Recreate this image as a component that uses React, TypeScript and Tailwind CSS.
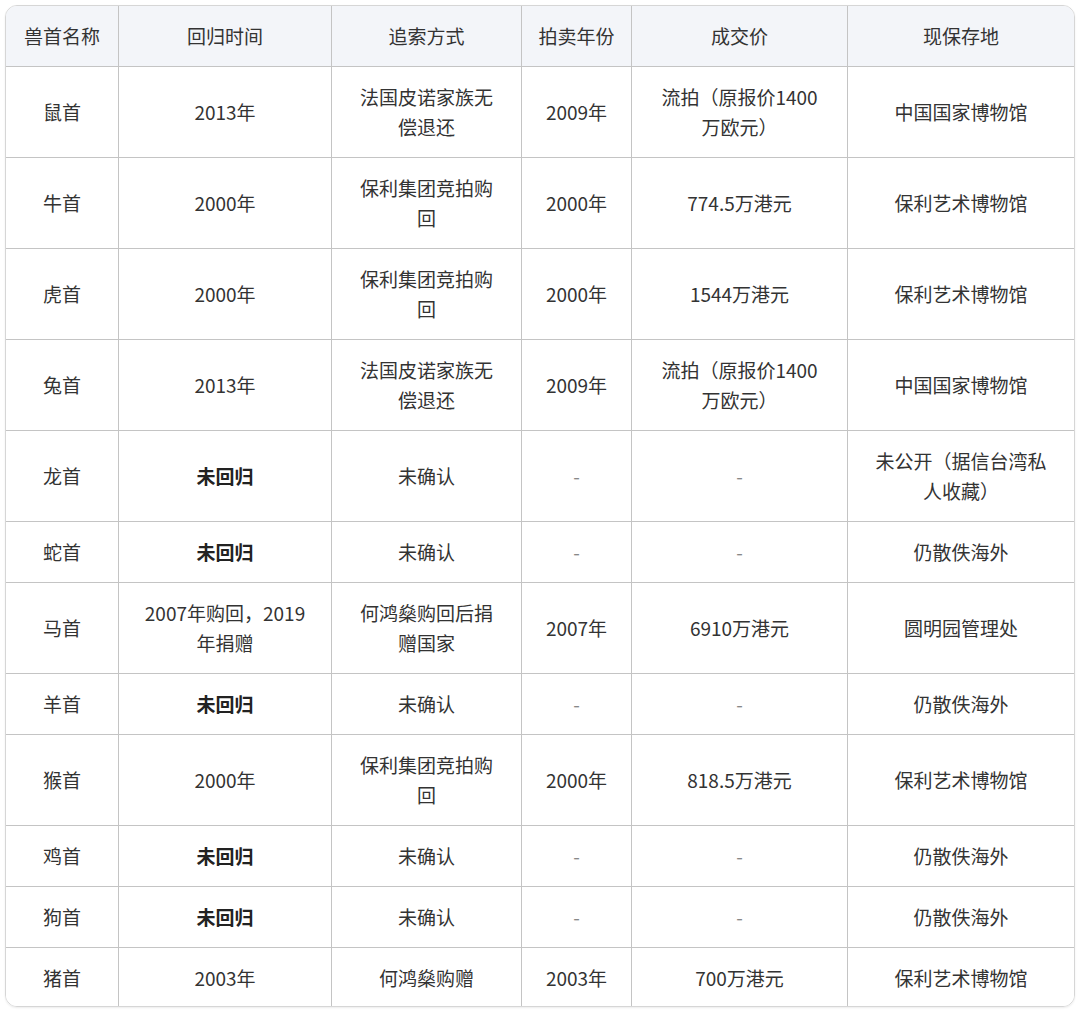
type Row = {
  name: string;
  back: string;
  bold?: boolean;
  way: string;
  year: string;
  price: string;
  place: string;
};

const rows: Row[] = [
  { name: "鼠首", back: "2013年", way: "法国皮诺家族无偿退还", year: "2009年", price: "流拍（原报价1400万欧元）", place: "中国国家博物馆" },
  { name: "牛首", back: "2000年", way: "保利集团竞拍购回", year: "2000年", price: "774.5万港元", place: "保利艺术博物馆" },
  { name: "虎首", back: "2000年", way: "保利集团竞拍购回", year: "2000年", price: "1544万港元", place: "保利艺术博物馆" },
  { name: "兔首", back: "2013年", way: "法国皮诺家族无偿退还", year: "2009年", price: "流拍（原报价1400万欧元）", place: "中国国家博物馆" },
  { name: "龙首", back: "未回归", bold: true, way: "未确认", year: "-", price: "-", place: "未公开（据信台湾私人收藏）" },
  { name: "蛇首", back: "未回归", bold: true, way: "未确认", year: "-", price: "-", place: "仍散佚海外" },
  { name: "马首", back: "2007年购回，2019年捐赠", way: "何鸿燊购回后捐赠国家", year: "2007年", price: "6910万港元", place: "圆明园管理处" },
  { name: "羊首", back: "未回归", bold: true, way: "未确认", year: "-", price: "-", place: "仍散佚海外" },
  { name: "猴首", back: "2000年", way: "保利集团竞拍购回", year: "2000年", price: "818.5万港元", place: "保利艺术博物馆" },
  { name: "鸡首", back: "未回归", bold: true, way: "未确认", year: "-", price: "-", place: "仍散佚海外" },
  { name: "狗首", back: "未回归", bold: true, way: "未确认", year: "-", price: "-", place: "仍散佚海外" },
  { name: "猪首", back: "2003年", way: "何鸿燊购赠", year: "2003年", price: "700万港元", place: "保利艺术博物馆" },
];

const headers = ["兽首名称", "回归时间", "追索方式", "拍卖年份", "成交价", "现保存地"];

const Cell = ({
  children,
  last,
  bottom,
  header,
  className = "",
}: {
  children: React.ReactNode;
  last?: boolean;
  bottom?: boolean;
  header?: boolean;
  className?: string;
}) => (
  <div
    className={`flex items-center justify-center text-center leading-[30px] border-[#c4c4c4] ${
      header
        ? "py-[15px] px-[4px] whitespace-nowrap bg-[#f3f5f9]"
        : bottom
          ? "pt-[15px] pb-[13px] px-[22px] bg-white"
          : "py-[15px] px-[22px] bg-white"
    } ${last ? "" : "border-r-[1.5px]"} ${bottom ? "" : "border-b-[1.5px]"} ${className}`}
  >
    {children}
  </div>
);

export default function App() {
  return (
    <div className="bg-white p-[5px] w-[1080px]">
      <div
        className="w-[1070px] rounded-[12px] border border-[#d6d6d6] overflow-hidden shadow-[0_1px_2px_rgba(0,0,0,0.08)] text-[19px] text-[#333]"
        style={{ fontFamily: '"Noto Sans CJK SC", "Noto Sans", sans-serif' }}
      >
        <div className="grid grid-cols-[113px_213px_190px_110px_216px_226px]">
          {headers.map((h, i) => (
            <Cell key={h} header last={i === 5}>
              {h}
            </Cell>
          ))}
          {rows.map((r, ri) => {
            const b = ri === rows.length - 1;
            return [
              <Cell key={`${ri}a`} bottom={b}>{r.name}</Cell>,
              <Cell key={`${ri}b`} bottom={b} className={r.bold ? "font-bold text-[#222]" : ""}>
                {r.back}
              </Cell>,
              <Cell key={`${ri}c`} bottom={b}>{r.way}</Cell>,
              <Cell key={`${ri}d`} bottom={b} className={r.year === "-" ? "text-[#888]" : ""}>
                {r.year}
              </Cell>,
              <Cell key={`${ri}e`} bottom={b} className={r.price === "-" ? "text-[#888]" : ""}>
                {r.price}
              </Cell>,
              <Cell key={`${ri}f`} bottom={b} last>{r.place}</Cell>,
            ];
          })}
        </div>
      </div>
    </div>
  );
}
